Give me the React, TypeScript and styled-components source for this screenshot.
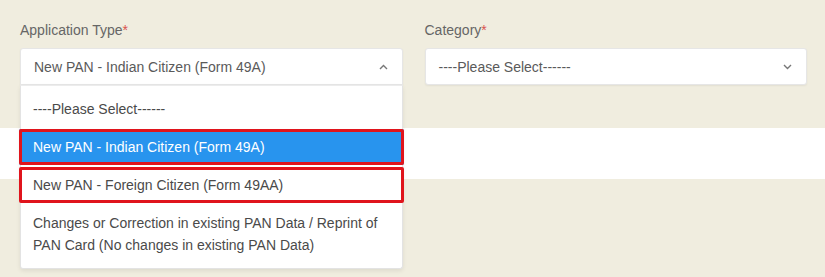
import styled, { createGlobalStyle } from 'styled-components';

const GlobalStyle = createGlobalStyle`
  html, body {
    margin: 0;
    padding: 0;
    background-color: #f0eddf;
    font-family: "Liberation Sans", Arial, sans-serif;
  }
  #root {
    min-height: 277px;
    display: flex;
    flex-direction: column;
  }
`;

const applicationTypes = [
  { label: '----Please Select------' },
  { label: 'New PAN - Indian Citizen (Form 49A)', active: true, marked: true },
  { label: 'New PAN - Foreign Citizen (Form 49AA)', marked: true },
  {
    label:
      'Changes or Correction in existing PAN Data / Reprint of PAN Card (No changes in existing PAN Data)',
  },
];

function Chevron({ up }: { up?: boolean }) {
  return (
    <svg width='9' height='6' viewBox='0 0 9 6'>
      <polyline
        points={up ? '1,5 4.5,1.5 8,5' : '1,1 4.5,4.5 8,1'}
        fill='none'
        stroke='#777'
        strokeWidth='1.4'
      />
    </svg>
  );
}

function App() {
  return (
    <>
      <GlobalStyle />
      <FormSection>
        <Field>
          <Label>
            Application Type<Required>*</Required>
          </Label>
          <SelectWrap>
            <SelectBox $open>
              <span>New PAN - Indian Citizen (Form 49A)</span>
              <Chevron up />
            </SelectBox>
            <Menu>
              {applicationTypes.map((opt) => (
                <Option key={opt.label} $active={opt.active} $marked={opt.marked}>
                  {opt.label}
                </Option>
              ))}
            </Menu>
          </SelectWrap>
        </Field>
        <Field>
          <Label>
            Category<Required>*</Required>
          </Label>
          <SelectWrap>
            <SelectBox>
              <span>----Please Select------</span>
              <Chevron />
            </SelectBox>
          </SelectWrap>
        </Field>
      </FormSection>
      <Band />
      <Rest />
    </>
  );
}

const FormSection = styled.div`
  height: 128px;
  box-sizing: border-box;
  padding: 21px 18px 0 20px;
  display: grid;
  grid-template-columns: 1fr 1fr;
  column-gap: 22px;
  align-items: start;
`;

const Field = styled.div`
  display: flex;
  flex-direction: column;
`;

const Label = styled.label`
  font-size: 14px;
  line-height: 18px;
  color: #666;
  margin-bottom: 9px;
`;

const Required = styled.span`
  color: #d9534f;
`;

const SelectWrap = styled.div`
  position: relative;
  z-index: 2;
`;

const SelectBox = styled.div<{ $open?: boolean }>`
  height: 37px;
  box-sizing: border-box;
  display: flex;
  align-items: center;
  justify-content: space-between;
  padding: 0 14px 0 13px;
  background: #fff;
  border: 1px solid #e6e6e6;
  border-radius: ${(p) => (p.$open ? '3px 3px 0 0' : '3px')};
  box-shadow: 0 1px 2px rgba(0, 0, 0, 0.06);
  font-size: 14px;
  color: #5a5a5a;
`;

const Menu = styled.div`
  position: absolute;
  top: 37px;
  left: 0;
  right: 0;
  background: #fff;
  border: 1px solid #e3e3e3;
  border-top-color: #ececec;
  border-radius: 0 0 3px 3px;
  box-shadow: 0 2px 4px rgba(0, 0, 0, 0.08);
  padding: 5px 0 5px;
`;

const Option = styled.div<{ $active?: boolean; $marked?: boolean }>`
  padding: 7px 12px;
  font-size: 14px;
  line-height: 22px;
  color: ${(p) => (p.$active ? '#fff' : '#4a4a4a')};
  background: ${(p) => (p.$active ? '#2894ee' : 'transparent')};
  outline: ${(p) => (p.$marked ? '3px solid #e0141c' : 'none')};
  outline-offset: -3px;
  margin: 0 ${(p) => (p.$marked ? '-2px' : '0')};
  padding-left: ${(p) => (p.$marked ? '14px' : '12px')};
  border-radius: 2px;
  & + & {
    margin-top: ${(p) => (p.$marked ? '2px' : '0')};
  }
`;

const Band = styled.div`
  height: 51px;
  background: #fff;
`;

const Rest = styled.div`
  flex: 1;
`;

export default App;
